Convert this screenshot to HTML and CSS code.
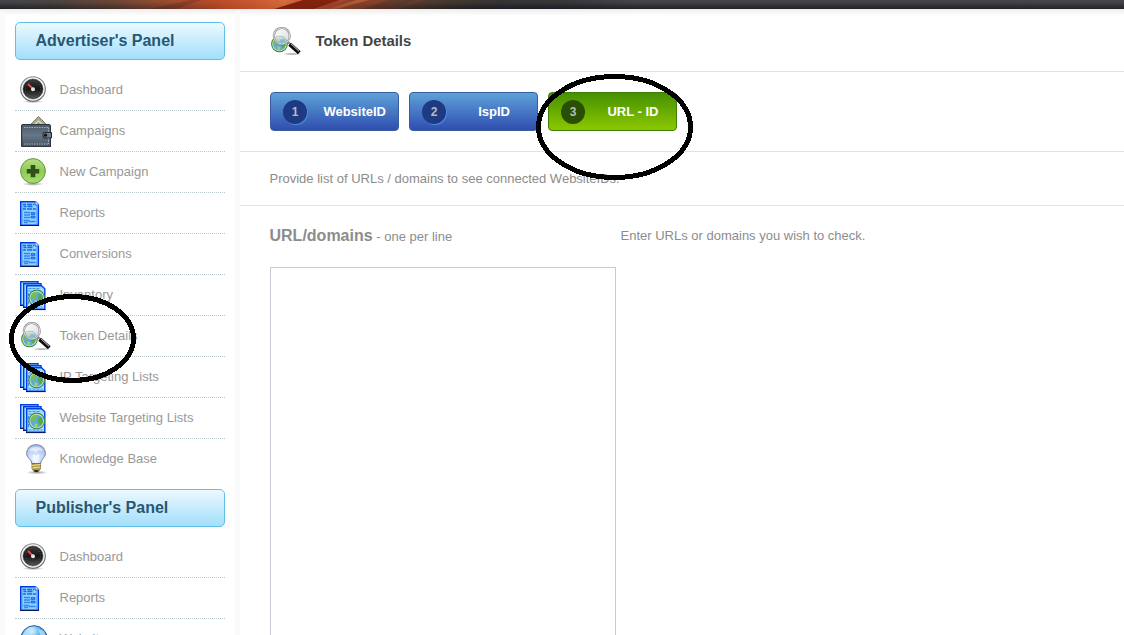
FILE: index.html
```html
<!DOCTYPE html>
<html lang="en">
<head>
<meta charset="utf-8">
<title>Token Details</title>
<link rel="stylesheet" href="styles.css">
</head>
<body>
<svg class="defs" width="0" height="0" aria-hidden="true">
  <defs>
    <linearGradient id="ring" x2="0" y2="1"><stop offset="0" stop-color="#8b8b8b"/><stop offset=".5" stop-color="#777"/><stop offset="1" stop-color="#5c5c5c"/></linearGradient>
    <linearGradient id="dial" x2="0" y2="1"><stop offset="0" stop-color="#3a3a3a"/><stop offset=".5" stop-color="#161616"/><stop offset="1" stop-color="#555"/></linearGradient>
    <linearGradient id="leather" x2="0" y2="1"><stop offset="0" stop-color="#4c5866"/><stop offset=".5" stop-color="#66778a"/><stop offset="1" stop-color="#465260"/></linearGradient>
    <linearGradient id="green" x2="0" y2="1"><stop offset="0" stop-color="#b4df83"/><stop offset=".5" stop-color="#8fcb57"/><stop offset="1" stop-color="#a4e069"/></linearGradient>
    <linearGradient id="glass" x2="1" y2="1"><stop offset="0" stop-color="#fff"/><stop offset="1" stop-color="#c8cbd0"/></linearGradient>
    <radialGradient id="shade"><stop offset="0" stop-color="#999"/><stop offset="1" stop-color="#999" stop-opacity="0"/></radialGradient>
    <radialGradient id="bulbfill" cx=".45" cy=".75" r=".8"><stop offset="0" stop-color="#f4f8ff"/><stop offset=".5" stop-color="#c5d6f5"/><stop offset="1" stop-color="#9eb7e8"/></radialGradient>
    <radialGradient id="sea" cx=".4" cy=".2" r=".8"><stop offset="0" stop-color="#e9faff"/><stop offset=".4" stop-color="#5fb2ec"/><stop offset="1" stop-color="#0b4fae"/></radialGradient>
    <linearGradient id="bar" gradientUnits="userSpaceOnUse" x1="0" x2="1124">
      <stop offset="0" stop-color="#44444a"/><stop offset=".045" stop-color="#4a4441"/><stop offset=".1" stop-color="#6b4635"/><stop offset=".155" stop-color="#a14d2e"/><stop offset=".19" stop-color="#b74a28"/><stop offset=".222" stop-color="#c95630"/><stop offset=".254" stop-color="#d66b3b"/><stop offset=".294" stop-color="#a2482c"/><stop offset=".325" stop-color="#7d3b26"/><stop offset=".356" stop-color="#5f3c2d"/><stop offset=".4" stop-color="#45382f"/><stop offset=".445" stop-color="#373436"/><stop offset=".5" stop-color="#39373a"/><stop offset=".57" stop-color="#464448"/><stop offset="1" stop-color="#474549"/>
    </linearGradient>
    <linearGradient id="barfade" x2="0" y2="1"><stop offset=".2" stop-color="#14161e" stop-opacity="0"/><stop offset="1" stop-color="#14161e"/></linearGradient>
    <linearGradient id="sides" gradientUnits="userSpaceOnUse" x1="0" x2="1124"><stop offset="0" stop-color="#fff" stop-opacity=".75"/><stop offset=".17" stop-color="#fff" stop-opacity=".3"/><stop offset=".2" stop-color="#fff" stop-opacity=".1"/><stop offset=".28" stop-color="#fff" stop-opacity=".1"/><stop offset=".42" stop-color="#fff" stop-opacity=".75"/></linearGradient>
    <mask id="edges"><rect width="1124" height="9" fill="url(#sides)"/></mask>
    <symbol id="i-gauge" viewBox="0 0 32 32">
      <ellipse cx="13" cy="25.500" rx="11" ry="1.600" fill="url(#shade)"/>
      <circle cx="13" cy="13" r="12.300" fill="#f3f3f3" stroke="url(#ring)" stroke-width="1.100"/>
      <circle cx="13" cy="13" r="10" fill="url(#dial)" stroke="#333" stroke-width=".5"/>
      <circle cx="13" cy="13" r="7.600" fill="none" stroke="#5c5c5c" stroke-width=".8" stroke-dasharray="1 2"/>
      <path d="M8 8l5 5" stroke="#f0464a" stroke-width="1.900"/>
      <circle cx="13" cy="13.200" r="2" fill="#e8e4e4"/>
    </symbol>
    <symbol id="i-wallet" viewBox="0 0 32 32">
      <path d="M9 10l9.500-9.500L28 10z" fill="#a6aa8c" stroke="#7a7f68"/>
      <path d="M12 10l6.500-6 6.500 6z" fill="#d3d5bd"/>
      <path d="M16 9l2.500-3L21 9z" fill="#8c9177"/>
      <path d="M1.500 9.500Q1.500 8.500 3 8.500H29.500Q30.500 8.500 30.500 10V30.500H2z" fill="url(#leather)" stroke="#2e3844"/>
      <path d="M4 11.500H28.500M4 28H28.500M28.500 11.500v4M28.500 22v6" stroke="#a3b0bd" stroke-dasharray="1.500 1" fill="none"/>
      <path d="M1.500 9v21.500H31" stroke="#303946" fill="none"/>
      <path d="M23.500 16.500H31.500v5.500H23.500q-1.500-2.700 0-5.500z" fill="#6f7d8c" stroke="#222b35"/>
      <circle cx="25.500" cy="19.200" r="1.600" fill="#111"/>
    </symbol>
    <symbol id="i-plus" viewBox="0 0 32 32">
      <ellipse cx="13" cy="26" rx="11" ry="1.900" fill="url(#shade)"/>
      <circle cx="13" cy="13" r="12.400" fill="url(#green)" stroke="#67943f"/>
      <path d="M10.700 7h4.600v3.900h3.900v4.500h-3.900v3.900h-4.600v-3.900H6.800v-4.500h3.900z" fill="#31501b"/>
    </symbol>
    <symbol id="i-page" viewBox="0 0 32 32">
      <path d="M.7.700H15.500L18.400 3.500V24.300H.7z" fill="#92d0ff" stroke="#0038e8" stroke-width="1.400"/>
      <path d="M0 24.500H19" stroke="#06175e"/>
      <path d="M15 0v4h4" fill="#d6f2ff" stroke="#1262e8"/>
      <path d="M3 3.500h11M3.500 5.500h9M3 8h13" stroke="#1469e0" stroke-width="1.500" stroke-dasharray="3 1 5 .8"/>
      <path d="M4 11.500h6M4 14h6M4 16.500h6M3.500 19.500h5l1 1h6M4 21.500h4" fill="none" stroke="#2f86ee" stroke-width="1.300"/>
      <path d="M11 11.500h4v2h-4zM11 15h4v2h-4z" fill="#3c8df0" stroke="#0f63de" stroke-width=".7"/>
      <path d="M2 2v21M17 5v18" stroke="#3c96f6"/>
    </symbol>
    <symbol id="i-globe" viewBox="0 0 16 16">
      <circle cx="8" cy="8" r="7.400" fill="#c4eaad" stroke="#3e8744"/>
      <circle cx="8" cy="8" r="6" fill="#5ca7e4"/>
      <path d="M2.200 6Q4 2 8 2l1 2-3 2 1 2-2 2-1-2z" fill="#79bd54"/>
      <path d="M10 4l3 1 1 4-2 3-2-1-1-3z" fill="#57a84e"/>
      <path d="M6 10l3 1-1 3-2-1z" fill="#9fd366"/>
    </symbol>
    <symbol id="i-pages" viewBox="0 0 32 32">
      <g fill="#a3dcff" stroke="#0040e3" stroke-width="1.400">
        <path d="M.7.700H18v23.600H.7z"/><path d="M3.700 2.700H21v23.600H3.700z"/>
        <path d="M6.700 4.700H21.500l3.300 3V28.300H6.700z"/>
      </g>
      <path d="M0 24.500H3.500M3 26.500H6.500M6 28.600H25.500" stroke="#06175e"/>
      <path d="M8.500 7.500h11M8.500 10h4M8.500 26h14M8.500 12v12" stroke="#3b93f0" stroke-dasharray="3 1"/>
      <use href="#i-globe" x="8.200" y="8.500" width="17" height="17"/>
    </symbol>
    <symbol id="i-lens" viewBox="0 0 32 32">
      <ellipse cx="21" cy="27" rx="10" ry="1.500" fill="url(#shade)"/>
      <use href="#i-globe" x="0" y="8.500" width="17" height="17"/>
      <path d="M17 15l4 4" stroke="#888" stroke-width="2.200"/>
      <path d="M18.700 17.300l9.600 8.500" stroke="#0c0c0c" stroke-width="4.200"/>
      <path d="M20 16.800l8 7.500" stroke="#dcdcdc" stroke-width="1"/>
      <circle cx="10.800" cy="9" r="8" fill="url(#glass)" fill-opacity=".7" stroke="#8f8f8f" stroke-width="2.200"/>
      <circle cx="10.800" cy="9" r="8" fill="none" stroke="#dedede" stroke-width="1"/>
      <path d="M8 15q1-3 5-3l2 1q-2 4-7 2z" fill="#68bde6" opacity=".8"/>
    </symbol>
    <symbol id="i-bulb" viewBox="0 0 32 32">
      <ellipse cx="17" cy="28.500" rx="11" ry="1.900" fill="url(#shade)"/>
      <path d="M12 20C12 15 6.500 14 6.500 9.500Q7.500.700 16 .700T25.500 9.500C25.500 14 20.500 15 20.500 20z" fill="url(#bulbfill)" stroke="#7880a0"/>
      <path d="M9 7q2-4 7-4t7 4q-6-2-7 2-2-3-7-2z" fill="#fff" opacity=".6"/>
      <path d="M13.500 11l2 8M19 11l-2 8M13 12q1-2 2 0t2 0 2 0" fill="none" stroke="#fff"/>
      <path d="M12 19.500h8.500v5l-2 3h-4.500l-2-3z" fill="#b39b48" stroke="#716331" stroke-width=".8"/>
      <path d="M12 21.500l8.500-1M12 24l8.500-1" stroke="#eee2a1" stroke-width="1.200"/>
      <path d="M14 26h4.500l-1 2h-2.500z" fill="#292929"/>
    </symbol>
    <symbol id="i-world" viewBox="0 0 32 32">
      <circle cx="14" cy="14" r="13.300" fill="url(#sea)" stroke="#1d5eb1"/>
      <path d="M3 9q4-6 9-7l2 3-5 3 1 4-6 2zM18 4l6 2 2 5-5 1z" fill="#b8e4fa" opacity=".75"/>
    </symbol>
  </defs>
</svg>
<svg class="topbar" width="1124" height="9">
  <rect width="1124" height="9" fill="url(#bar)"/>
  <path d="M202 0L176 9H150L190 0z" fill="#6d2c18" opacity=".4"/>
  <path d="M303 0L274 9H314L340 0z" fill="#84220f"/>
  <path d="M340 0L314 9H323L348 0z" fill="#a44429"/>
  <path d="M356 0L328 9H336L370 0z" fill="#bd603b" opacity=".8"/>
  <path d="M388 0L362 9H344L370 0z" fill="#984a30" opacity=".5"/>
  <path d="M425 0L399 9H390L416 0z" fill="#774131" opacity=".4"/>
  <rect width="1124" height="9" fill="url(#barfade)" mask="url(#edges)"/>
</svg>
<div class="layout">
  <aside class="sidebar">
    <h2 class="panel-title">Advertiser's Panel</h2>
    <ul class="menu">
      <li><svg><use href="#i-gauge"/></svg><a>Dashboard</a></li>
      <li><svg class="tall"><use href="#i-wallet"/></svg><a>Campaigns</a></li>
      <li><svg><use href="#i-plus"/></svg><a>New Campaign</a></li>
      <li><svg class="low"><use href="#i-page"/></svg><a>Reports</a></li>
      <li><svg class="low"><use href="#i-page"/></svg><a>Conversions</a></li>
      <li><svg><use href="#i-pages"/></svg><a>Inventory</a></li>
      <li><svg class="lens"><use href="#i-lens"/></svg><a>Token Details</a></li>
      <li><svg><use href="#i-pages"/></svg><a>IP Targeting Lists</a></li>
      <li><svg><use href="#i-pages"/></svg><a>Website Targeting Lists</a></li>
      <li><svg class="tall"><use href="#i-bulb"/></svg><a>Knowledge Base</a></li>
    </ul>
    <h2 class="panel-title">Publisher's Panel</h2>
    <ul class="menu">
      <li><svg><use href="#i-gauge"/></svg><a>Dashboard</a></li>
      <li><svg class="low"><use href="#i-page"/></svg><a>Reports</a></li>
      <li><svg><use href="#i-world"/></svg><a>Websites</a></li>
    </ul>
  </aside>
  <main class="content">
    <header class="page-head"><svg><use href="#i-lens"/></svg><h1>Token Details</h1></header>
    <nav class="steps">
      <a class="step"><span class="num">1</span><span class="label">WebsiteID</span></a>
      <a class="step"><span class="num">2</span><span class="label">IspID</span></a>
      <a class="step active"><span class="num">3</span><span class="label">URL - ID</span></a>
    </nav>
    <p class="intro">Provide list of URLs / domains to see connected WebsiteIDs.</p>
    <section class="form">
      <div class="field">
        <label><b>URL/domains</b> - one per line</label>
        <div class="textarea"></div>
      </div>
      <p class="hint">Enter URLs or domains you wish to check.</p>
    </section>
  </main>
</div>
<svg class="marks" width="1124" height="635" shape-rendering="crispEdges">
  <ellipse cx="72.500" cy="338.500" rx="61" ry="42"/>
  <ellipse cx="614.500" cy="127" rx="76" ry="50.500"/>
</svg>
</body>
</html>
```
FILE: styles.css
```css
* { box-sizing: border-box; }
body {
  margin: 0;
  height: 635px;
  overflow: hidden;
  background: #fff;
  color: #8c8c8c;
  font: 13px/20px "Liberation Sans", Arial, sans-serif;
}
h1, h2, p, ul { margin: 0; padding: 0; }
.defs { position: absolute; }
.topbar { display: block; }
.layout {
  display: flex;
  height: 626px;
  overflow: hidden;
  background: linear-gradient(to bottom, #ededed, #fff 7px) 0 0 / 100% 7px no-repeat;
}
.sidebar {
  width: 240px;
  flex: none;
  padding: 13px 10px 0 10px;
  background:
    linear-gradient(#fafafa, #fafafa) 0 2px / 5px 100% no-repeat,
    linear-gradient(#fafafa, #fafafa) 235px 2px / 5px 100% no-repeat;
}
.panel-title {
  height: 38px;
  margin: 0 5px 10px;
  padding-left: 19.500px;
  border: 1px solid #62bfe8;
  border-radius: 5px;
  background: linear-gradient(#ecf9ff, #a2dffb);
  color: #285773;
  font-size: 16px;
  line-height: 35px;
}
.menu { list-style: none; margin: 0 5px 9px; }
.menu li {
  display: flex;
  height: 41px;
  padding: 6px 0 0 5px;
  border-bottom: 1px dotted #b9c7cc;
}
.menu li:last-child { border-bottom: 0; }
.menu svg { width: 32px; height: 32px; flex: none; }
.menu svg.low { margin-top: 2px; }
.menu svg.tall { margin-top: -1px; }
.menu svg.lens { margin: 0 -1px 0 1px; }
.menu a { margin-left: 7.500px; padding-top: 4px; color: #999; }
.content { flex: 1; min-width: 0; }
.page-head {
  display: flex;
  height: 63px;
  padding: 18px 0 0 31px;
  border-bottom: 1px solid #e2e2e2;
}
.page-head svg { width: 32px; height: 32px; }
.page-head h1 {
  margin-left: 12.500px;
  padding-top: 4px;
  color: #444;
  font-size: 14.900px;
  line-height: 20px;
}
.steps {
  display: flex;
  gap: 10px;
  height: 80px;
  padding: 20px 0 0 30px;
  border-bottom: 1px solid #e2e2e2;
}
.step {
  display: flex;
  align-items: center;
  justify-content: space-between;
  width: 129px;
  height: 39px;
  padding: 0 12px;
  border: 1px solid #365e9f;
  border-radius: 4px;
  background: linear-gradient(#5da1d8, #304eaf);
  color: #fff;
  font-weight: bold;
}
.step .num {
  width: 24px;
  height: 24px;
  border-radius: 50%;
  background: #1e3a83;
  box-shadow: 1px 1px 0 #4b8bdb;
  color: #bbb;
  font-size: 12px;
  line-height: 24px;
  text-align: center;
}
.step .label { padding-top: 1px; }
.step:nth-child(2) .label { margin-right: 15px; }
.step.active { border-color: #3d8003; background: linear-gradient(#459000, #8cc800); }
.step.active .num { background: #294f04; box-shadow: none; }
.step.active .label { margin-right: 5.500px; }
.intro {
  height: 54px;
  padding: 17px 0 0 29.500px;
  border-bottom: 1px solid #e2e2e2;
}
.form { display: flex; padding: 20px 0 0 29.500px; }
.field { width: 351px; }
.field label { display: block; line-height: 20px; }
.field b { font-size: 16px; }
.textarea {
  width: 346px;
  height: 400px;
  margin: 20px 0 0 .500px;
  border: 1px solid #c6cbd5;
}
.marks { position: absolute; left: 0; top: 0; fill: none; stroke: #000; stroke-width: 5px; }
```
